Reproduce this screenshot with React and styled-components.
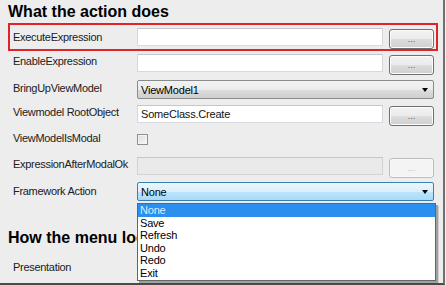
import React from "react";
import styled, { createGlobalStyle } from "styled-components";

const Global = createGlobalStyle`
  html, body {
    margin: 0;
    padding: 0;
    background: #f0f0f0;
  }
  * { box-sizing: border-box; }
`;

const Frame = styled.div`
  position: relative;
  width: 445px;
  height: 285px;
  overflow: hidden;
  background: #ededed;
  border-right: 2px solid #6f6f6f;
  border-bottom: 2px solid #4a4a4a;
  font-family: "Liberation Sans", Arial, sans-serif;
  color: #1a1a1a;
`;

const Heading = styled.h2`
  margin: 0;
  padding: ${(p) => p.pad || "2px 0 0 8px"};
  height: ${(p) => p.h || 23}px;
  width: ${(p) => p.w || "auto"};
  overflow: hidden;
  white-space: nowrap;
  font-size: 16px;
  font-weight: bold;
  color: #000;
  line-height: 19px;
`;

const Highlight = styled.div`
  margin-left: 8px;
  width: 430px;
  height: 28px;
  border: 2px solid #e0222b;
  padding-top: 3px;
`;

const Row = styled.div`
  display: grid;
  grid-template-columns: 118px 246px 45px;
  column-gap: 6px;
  align-items: start;
  padding-left: ${(p) => (p.inBox ? 3 : 13)}px;
  padding-top: ${(p) => (p.inBox ? 0 : 3)}px;
  height: ${(p) => p.h || 26}px;
  position: relative;
`;

const Label = styled.div`
  font-size: 11px;
  letter-spacing: -0.3px;
  line-height: 13px;
  padding-top: ${(p) => p.top ?? 1}px;
  color: #202020;
  white-space: nowrap;
`;

const TextBox = styled.div`
  height: 18px;
  background: ${(p) => (p.disabled ? "#eaeaea" : "#fff")};
  border: 1px solid ${(p) => (p.disabled ? "#d2d2d2" : "#d6d9de")};
  border-top-color: ${(p) => (p.disabled ? "#c6c6c6" : "#c3c6cc")};
  font-size: 11px;
  letter-spacing: -0.2px;
  line-height: 16px;
  padding-left: 3px;
  color: #111;
`;

const Dots = styled.button`
  height: 20px;
  margin-top: 1px;
  border-radius: 3px;
  border: 1px solid ${(p) => (p.disabled ? "#bdbdbd" : "#707070")};
  background: ${(p) =>
    p.disabled
      ? "#f4f4f4"
      : "linear-gradient(#f2f2f2 0%, #ebebeb 50%, #dddddd 51%, #cfcfcf 100%)"};
  box-shadow: inset 0 0 0 1px ${(p) => (p.disabled ? "#f8f8f8" : "#fcfcfc")};
  font-family: "Liberation Sans", Arial, sans-serif;
  font-size: 9px;
  color: ${(p) => (p.disabled ? "#b8b8b8" : "#555")};
  padding: 0;
  line-height: 16px;
`;

const Select = styled.div`
  grid-column: span 2;
  width: 297px;
  height: 19px;
  border: 1px solid ${(p) => (p.active ? "#3c7fb1" : "#8a8a8a")};
  border-radius: 2px;
  background: ${(p) =>
    p.active
      ? "linear-gradient(#eaf6fd 0%, #d9f0fc 50%, #bee6fd 51%, #a7d9f5 100%)"
      : "linear-gradient(#f2f2f2 0%, #ebebeb 50%, #dddddd 51%, #cfcfcf 100%)"};
  display: flex;
  align-items: center;
  justify-content: space-between;
  padding: 0 5px 0 3px;
  font-size: 11px;
  letter-spacing: -0.2px;
  color: #000;
`;

const Arrow = styled.span`
  width: 0;
  height: 0;
  border-left: 3.5px solid transparent;
  border-right: 3.5px solid transparent;
  border-top: 4px solid #000;
`;

const Check = styled.div`
  width: 11px;
  height: 11px;
  margin-top: 3px;
  border: 1px solid #8f8f8f;
  background: linear-gradient(135deg, #dcdcdc, #f8f8f8);
  box-shadow: inset 0 0 0 1px #f4f4f4;
`;

const List = styled.div`
  position: absolute;
  left: 137px;
  top: 203px;
  width: 299px;
  border: 1px solid #646464;
  background: #fff;
  box-shadow: 2px 2px 0 #a0a0a0, 3px 3px 0 #cfcfcf;
  z-index: 2;
`;

const Option = styled.div`
  height: 12.6px;
  line-height: 12.6px;
  padding-left: 2px;
  font-size: 11px;
  letter-spacing: -0.2px;
  color: ${(p) => (p.selected ? "#dcecff" : "#000")};
  background: ${(p) => (p.selected ? "#2b8ff0" : "transparent")};
`;

const options = ["None", "Save", "Refresh", "Undo", "Redo", "Exit"];

export default function App() {
  return (
    <Frame>
      <Global />
      <Heading>What the action does</Heading>
      <Highlight>
        <Row inBox h={23}>
          <Label top={3}>ExecuteExpression</Label>
          <TextBox />
          <Dots>...</Dots>
        </Row>
      </Highlight>
      <Row h={26}>
        <Label>EnableExpression</Label>
        <TextBox />
        <Dots>...</Dots>
      </Row>
      <Row h={25}>
        <Label top={2}>BringUpViewModel</Label>
        <Select>
          ViewModel1
          <Arrow />
        </Select>
      </Row>
      <Row h={26}>
        <Label>Viewmodel RootObject</Label>
        <TextBox>SomeClass.Create</TextBox>
        <Dots>...</Dots>
      </Row>
      <Row h={26}>
        <Label>ViewModelIsModal</Label>
        <Check />
      </Row>
      <Row h={25}>
        <Label>ExpressionAfterModalOk</Label>
        <TextBox disabled />
        <Dots disabled>...</Dots>
      </Row>
      <Row h={26}>
        <Label top={3}>Framework Action</Label>
        <Select active>
          None
          <Arrow />
        </Select>
      </Row>
      <Heading pad="23px 0 0 8px" h={46} w="137px">
        How the menu looks
      </Heading>
      <Row h={20}>
        <Label top={7}>Presentation</Label>
      </Row>
      <List>
        {options.map((o, i) => (
          <Option key={o} selected={i === 0}>
            {o}
          </Option>
        ))}
      </List>
    </Frame>
  );
}
